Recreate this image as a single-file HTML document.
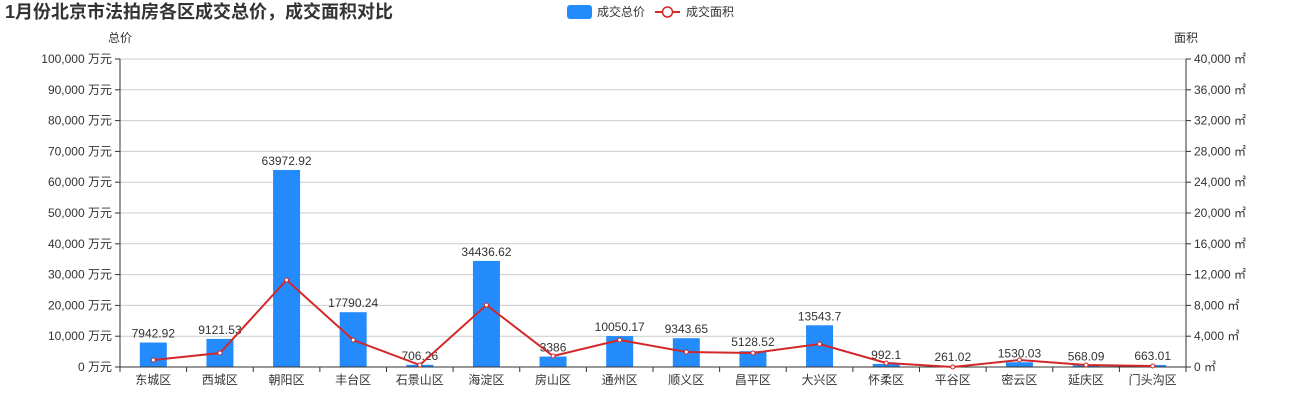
<!DOCTYPE html>
<html><head><meta charset="utf-8"><style>
body{margin:0;background:#fff;width:1300px;height:400px;overflow:hidden;font-family:"Liberation Sans","Noto Sans CJK SC",sans-serif}
</style></head><body>
<svg id="s" width="1300" height="400" xmlns="http://www.w3.org/2000/svg" font-family="Liberation Sans, Noto Sans CJK SC, sans-serif">
<text x="5" y="18" font-size="18" font-weight="bold" fill="#333">1月份北京市法拍房各区成交总价，成交面积对比</text>
<rect x="567" y="5" width="25" height="14" rx="3" fill="#248BFD"/>
<text x="597" y="16" font-size="12" fill="#333">成交总价</text>
<line x1="655" y1="12" x2="680" y2="12" stroke="#D2282A" stroke-width="2"/>
<circle cx="667.5" cy="12" r="5" fill="#fff" stroke="#D2282A" stroke-width="1.5"/>
<text x="686" y="16" font-size="12" fill="#333">成交面积</text>
<text x="120" y="42" font-size="12" fill="#333" text-anchor="middle">总价</text>
<text x="1186" y="42" font-size="12" fill="#333" text-anchor="middle">面积</text>
<g id="g"></g>
</svg>
<script>
var g=document.getElementById('g'),h='';
var L=120,R=1186,T=59,B=367,H=B-T;
for(var i=0;i<=10;i++){var y=B-H*i/10;
 if(i>0)h+='<line x1="'+L+'" y1="'+y+'" x2="'+R+'" y2="'+y+'" stroke="#ccc"/>';
 h+='<line x1="'+(L-5)+'" y1="'+y+'" x2="'+L+'" y2="'+y+'" stroke="#333"/>';
 h+='<line x1="'+R+'" y1="'+y+'" x2="'+(R+5)+'" y2="'+y+'" stroke="#333"/>';
 h+='<text x="'+(L-8)+'" y="'+(y+4)+'" font-size="12" fill="#333" text-anchor="end">'+(i*10000).toLocaleString('en-US')+' 万元</text>';
 h+='<text x="'+(R+8)+'" y="'+(y+4)+'" font-size="12" fill="#333">'+(i*4000).toLocaleString('en-US')+' ㎡</text>';}
h+='<line x1="'+L+'" y1="'+T+'" x2="'+L+'" y2="'+B+'" stroke="#333"/>';
h+='<line x1="'+R+'" y1="'+T+'" x2="'+R+'" y2="'+B+'" stroke="#333"/>';
var n=['东城区','西城区','朝阳区','丰台区','石景山区','海淀区','房山区','通州区','顺义区','昌平区','大兴区','怀柔区','平谷区','密云区','延庆区','门头沟区'];
var v=[7942.92,9121.53,63972.92,17790.24,706.26,34436.62,3386,10050.17,9343.65,5128.52,13543.7,992.1,261.02,1530.03,568.09,663.01];
var ly=[360,353,280,340,365,305,356,340,352,353,344,363,367,360,365,366];
var w=(R-L)/16,pts=[];
for(var k=0;k<16;k++){var cx=L+w*(k+.5),bh=v[k]/100000*H;
 h+='<rect x="'+(cx-13.5)+'" y="'+(B-bh)+'" width="27" height="'+bh+'" fill="#248BFD"/>';
 h+='<text x="'+cx+'" y="'+(B-bh-5)+'" font-size="12" fill="#333" text-anchor="middle">'+v[k]+'</text>';
 h+='<text x="'+cx+'" y="'+(B+17)+'" font-size="12" fill="#333" text-anchor="middle">'+n[k]+'</text>';
 pts.push(cx+','+ly[k]);}
h+='<line x1="'+L+'" y1="'+B+'" x2="'+R+'" y2="'+B+'" stroke="#333"/>';
for(var k=0;k<=16;k++){var x=L+w*k;h+='<line x1="'+x+'" y1="'+B+'" x2="'+x+'" y2="'+(B+5)+'" stroke="#333"/>';}
h+='<polyline points="'+pts.join(' ')+'" fill="none" stroke="#D2282A" stroke-width="2"/>';
for(var k=0;k<16;k++){var p=pts[k].split(',');h+='<circle cx="'+p[0]+'" cy="'+p[1]+'" r="2" fill="#fff" stroke="#D2282A"/>';}
g.innerHTML=h;
</script>
</body></html>
